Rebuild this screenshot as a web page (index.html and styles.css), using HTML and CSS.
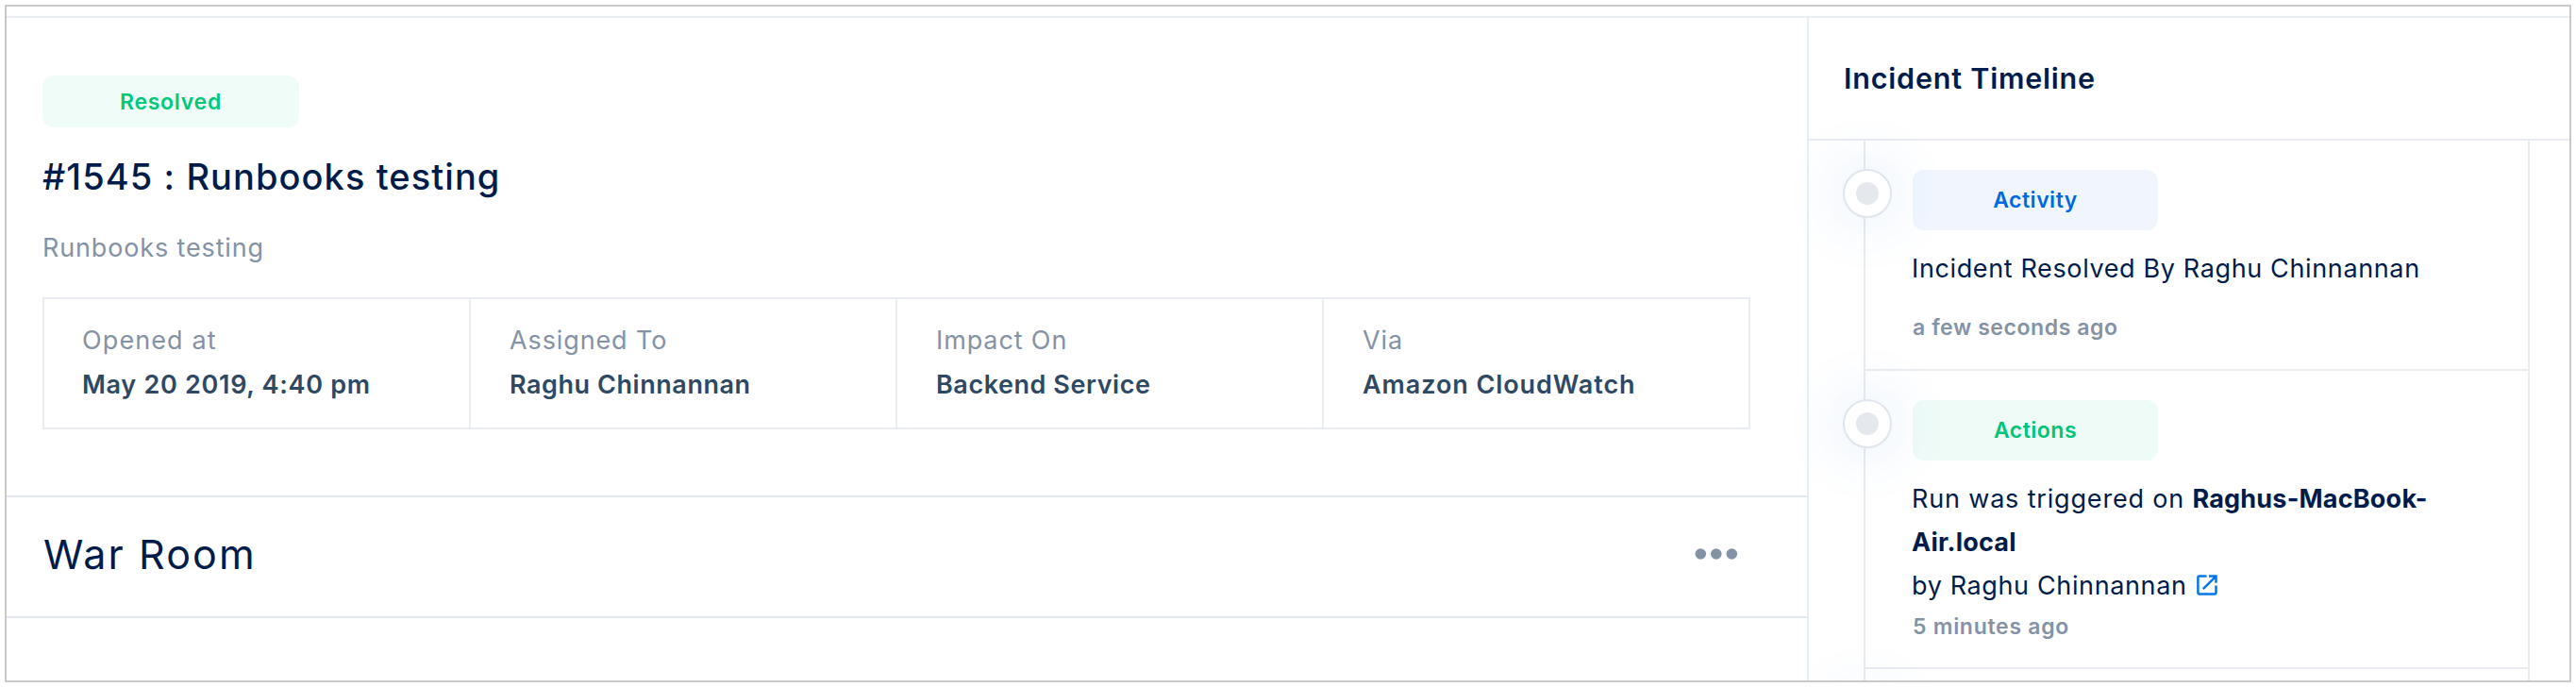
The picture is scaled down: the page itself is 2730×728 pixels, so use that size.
FILE: index.html
```html
<!DOCTYPE html>
<html lang="en">
<head>
<meta charset="utf-8">
<title>Incident #1545</title>
<link rel="stylesheet" href="styles.css">
</head>
<body>
<div class="frame">
  <div class="page">
    <main class="main">
      <section class="details">
        <span class="badge badge-status">Resolved</span>
        <h1 class="title">#1545 : Runbooks testing</h1>
        <p class="subtitle">Runbooks testing</p>
        <dl class="facts">
          <div class="fact"><dt class="ls-opened">Opened at</dt><dd>May 20 2019, 4:40 pm</dd></div>
          <div class="fact"><dt>Assigned To</dt><dd class="ls-name">Raghu Chinnannan</dd></div>
          <div class="fact"><dt>Impact On</dt><dd class="ls-service">Backend Service</dd></div>
          <div class="fact"><dt>Via</dt><dd class="ls-source">Amazon CloudWatch</dd></div>
        </dl>
      </section>
      <section class="war-room">
        <h2 class="war-title">War Room</h2>
        <svg class="more" width="46" height="12" viewBox="0 0 46 12" fill="#8492a6"><circle cx="6.3" cy="6" r="5.8"/><circle cx="22.8" cy="6" r="5.8"/><circle cx="39.3" cy="6" r="5.8"/></svg>
      </section>
    </main>
    <aside class="side">
      <header class="side-head"><h3 class="side-title">Incident Timeline</h3></header>
      <div class="timeline">
        <article class="item item-activity">
          <span class="badge badge-activity">Activity</span>
          <p class="text">Incident Resolved By Raghu Chinnannan</p>
          <p class="time">a few seconds ago</p>
          <i class="node"></i>
        </article>
        <article class="item item-actions">
          <span class="badge badge-actions">Actions</span>
          <p class="text"><span class="ls-run">Run was triggered on</span> <b class="host">Raghus-MacBook-<br>Air.local</b><br>by Raghu Chinnannan<svg class="open" width="22" height="22" viewBox="0 0 22 22" fill="none" stroke="#0077ea" stroke-width="2.5"><path d="M10.6 1.6H2.6Q1.4 1.6 1.4 2.8V19.2Q1.4 20.4 2.6 20.4H19.4Q20.5 20.4 20.5 19.2V11.6"/><path d="M13 1.6H20.5V8.8M20.2 1.8L6.8 15.2"/></svg></p>
          <p class="time time-late">5 minutes ago</p>
          <i class="node"></i>
        </article>
        <article class="item"><i class="node"></i></article>
      </div>
    </aside>
  </div>
</div>
</body>
</html>
```
FILE: styles.css
```css
* { box-sizing: border-box; }
body {
  margin: 0;
  padding: 5px;
  height: 728px;
  overflow: hidden;
  background: #fff;
  color: #001c4a;
  font-family: Inter, "Open Sans", sans-serif;
}
h1, h2, h3, p, dl, dd { margin: 0; }

.frame {
  width: 2720px;
  height: 718px;
  padding-top: 10px;
  border: 2px solid #c9c9c9;
  overflow: hidden;
}
.page {
  display: flex;
  height: 704px;
  border-top: 2px solid #e7eefa;
}

.main { width: 1910px; border-right: 2px solid #e5edf5; }
.details {
  height: 508px;
  padding: 61px 0 0 38px;
  border-bottom: 2px solid #e0e6ed;
}
.badge {
  display: flex;
  align-items: center;
  justify-content: center;
  width: 260px;
  height: 64px;
  border-radius: 12px;
  font-size: 23px;
  font-weight: 600;
  letter-spacing: 0.6px;
  line-height: 34px;
}
.badge-status {
  width: 272px;
  height: 55px;
  background: #effcf7;
  color: #00c97b;
  letter-spacing: 0.74px;
}
.title {
  margin-top: 28px;
  font-size: 38px;
  font-weight: 500;
  letter-spacing: 1.08px;
  line-height: 48px;
}
.subtitle {
  margin-top: 35px;
  color: #8492a6;
  font-size: 27px;
  letter-spacing: 0.85px;
  line-height: 34px;
}
.facts {
  display: flex;
  width: 1810px;
  height: 140px;
  margin-top: 35px;
  border: 2px solid #e9ecf1;
  font-size: 27px;
  line-height: 34px;
}
.fact {
  flex: 0 0 452px;
  padding: 27px 0 0 41px;
  border-right: 2px solid #e9ecf1;
}
.fact:first-child { padding-left: 40px; }
.fact:last-child { flex-basis: 450px; border-right: 0; }
.fact dt { color: #8492a6; letter-spacing: 0.88px; }
.fact dd { margin-top: 13px; color: #2e4963; font-weight: 600; letter-spacing: 0.7px; }
.fact .ls-opened { letter-spacing: 1.1px; }
.fact .ls-name { letter-spacing: 0.55px; }
.fact .ls-service { letter-spacing: 0.55px; }
.fact .ls-source { letter-spacing: 0.92px; }

.war-room {
  display: flex;
  align-items: center;
  justify-content: space-between;
  height: 128px;
  padding: 0 73px 7px 39px;
  border-bottom: 2px solid #e0e6ed;
}
.war-title {
  font-size: 43px;
  font-weight: 400;
  letter-spacing: 2.1px;
  line-height: 52px;
}

.side { flex: 1; }
.side-head {
  height: 130px;
  padding: 45px 0 0 37px;
  border-bottom: 2px solid #e9ecf1;
}
.side-title {
  font-size: 30.5px;
  font-weight: 600;
  letter-spacing: 0.8px;
  line-height: 38px;
}
.timeline {
  width: 706px;
  height: 600px;
  margin-left: 58px;
  border: solid #e9ecf1;
  border-width: 0 2px;
}
.item {
  position: relative;
  padding: 31px 0 0 50px;
  border-bottom: 2px solid #e9ecf1;
}
.item-activity { height: 244px; }
.item-actions { height: 316px; }
.badge-activity { background: #f1f6fe; color: #0069e0; letter-spacing: 0.5px; }
.badge-actions { background: #effbf7; color: #00c47a; letter-spacing: 0.5px; }
.text {
  margin: 18px 0 0 -1px;
  font-size: 27px;
  letter-spacing: 0.63px;
  line-height: 46px;
  white-space: nowrap;
}
.ls-run { letter-spacing: 0.83px; }
.host { font-weight: 700; letter-spacing: 0.2px; }
.open { margin-left: 10px; vertical-align: -1px; }
.time {
  margin-top: 22px;
  color: #8492a6;
  font-size: 23px;
  font-weight: 600;
  letter-spacing: 0.57px;
  line-height: 34px;
}
.time-late { margin-top: 3px; letter-spacing: 0.72px; }

/* Timeline marker sits over the vertical rule */
.node {
  position: absolute;
  left: -24px;
  top: 30px;
  display: grid;
  place-items: center;
  width: 52px;
  height: 52px;
  border: 2px solid #e0e6ed;
  border-radius: 50%;
  background: #fff;
  box-shadow: 0 0 60px 8px rgba(60, 130, 220, 0.12);
}
.node::after {
  content: "";
  width: 24px;
  height: 24px;
  margin-right: 1px;
  border-radius: 50%;
  background: #e5e9ee;
}
```
